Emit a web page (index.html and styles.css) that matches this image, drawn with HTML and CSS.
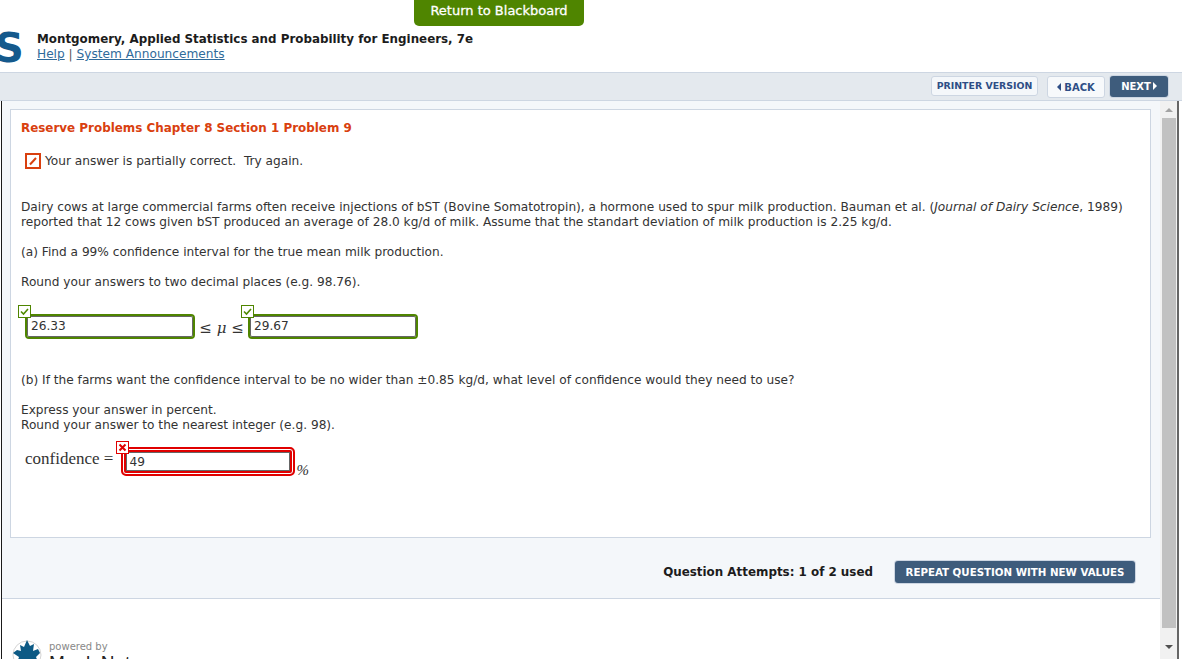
FILE: index.html
```html
<!DOCTYPE html>
<html lang="en">
<head>
    <meta charset="UTF-8">
    <title>WileyPLUS</title>
    <link rel="stylesheet" href="styles.css">
</head>
<body>
    <header class="top">
        <a class="return-btn">Return to Blackboard</a>
        <div class="brand">
            <span class="logo-s">S</span>
            <div class="titles">
                <div class="book">Montgomery, Applied Statistics and Probability for Engineers, 7e</div>
                <div class="links"><a>Help</a> | <a>System Announcements</a></div>
            </div>
        </div>
    </header>

    <nav class="toolbar">
        <a class="btn-print">PRINTER VERSION</a>
        <a class="btn-back"><span class="arrow-left"></span>BACK</a>
        <a class="btn-next">NEXT<span class="arrow-right"></span></a>
    </nav>

    <div class="frame">
        <div class="scroller">
            <div class="content">
                <main class="card">
                    <h2>Reserve Problems Chapter 8 Section 1 Problem 9</h2>
                    <div class="status">
                        <span class="partial-icon">
                            <svg width="12" height="12" viewBox="0 0 12 12"><path d="M3 9.5L9 3" stroke="#d9400f" stroke-width="2"/></svg>
                        </span>
                        <span>Your answer is partially correct.&nbsp; Try again.</span>
                    </div>

                    <p class="intro">Dairy cows at large commercial farms often receive injections of bST (Bovine Somatotropin), a hormone used to spur milk production. Bauman et al. (<i>Journal of Dairy Science</i>, 1989)<br>reported that 12 cows given bST produced an average of 28.0 kg/d of milk. Assume that the standart deviation of milk production is 2.25 kg/d.</p>
                    <p class="part-a">(a) Find a 99% confidence interval for the true mean milk production.</p>
                    <p class="round-a">Round your answers to two decimal places (e.g. 98.76).</p>

                    <div class="answers">
                        <div class="field ok">
                            <span class="mark mark-ok">
                                <svg width="9" height="9" viewBox="0 0 9 9"><path d="M1 4.5L3.5 7L8 2" fill="none" stroke="#4f8a00" stroke-width="1.6"/></svg>
                            </span>
                            <span class="value">26.33</span>
                        </div>
                        <span class="math">≤ <i>μ</i> ≤</span>
                        <div class="field ok">
                            <span class="mark mark-ok">
                                <svg width="9" height="9" viewBox="0 0 9 9"><path d="M1 4.5L3.5 7L8 2" fill="none" stroke="#4f8a00" stroke-width="1.6"/></svg>
                            </span>
                            <span class="value">29.67</span>
                        </div>
                    </div>

                    <p class="part-b">(b) If the farms want the confidence interval to be no wider than ±0.85 kg/d, what level of confidence would they need to use?</p>
                    <p class="round-b">Express your answer in percent.<br>Round your answer to the nearest integer (e.g. 98).</p>

                    <div class="answers-b">
                        <span class="math-label">confidence =</span>
                        <div class="field bad">
                            <span class="mark mark-bad">
                                <svg width="9" height="9" viewBox="0 0 9 9"><path d="M1.5 1.5L7.5 7.5M7.5 1.5L1.5 7.5" stroke="#e00000" stroke-width="2"/></svg>
                            </span>
                            <span class="value">49</span>
                        </div>
                        <span class="percent">%</span>
                    </div>
                </main>

                <div class="attempts">
                    <span class="attempts-text">Question Attempts: 1 of 2 used</span>
                    <a class="btn-repeat">REPEAT QUESTION WITH NEW VALUES</a>
                </div>
            </div>

            <footer class="powered">
                <svg class="leaf" width="30" height="30" viewBox="0 0 30 30">
                    <circle cx="15" cy="15" r="14" fill="none" stroke="#d5d5d5"/>
                    <path d="M15 0L18 6L22 4L21 11L26 9L28 13L24 17L26 22L17 22L17 29L14 29L14 22L5 23L7 17L1 13L5 10L9 11L8 5L12 7Z" fill="#0d5a85"/>
                </svg>
                <div class="powered-text">
                    <div class="powered-by">powered by</div>
                    <div class="maple">MapleNet</div>
                </div>
            </footer>
        </div>

        <div class="scrollbar">
            <span class="tri-up"></span>
            <span class="thumb"></span>
            <span class="tri-down"></span>
        </div>
    </div>
</body>
</html>
```

FILE: styles.css
```css
/* General */
html, body {
    height: 659px;
    overflow: hidden;
}
body {
    margin: 0;
    font-family: "DejaVu Sans", Verdana, sans-serif;
    font-size: 12.17px;
    color: #333;
    background-color: #fff;
    display: flex;
    flex-direction: column;
}
a {
    cursor: pointer;
}

/* Header */
.top {
    position: relative;
    height: 72px;
    flex: none;
    overflow: hidden;
}
.return-btn {
    position: absolute;
    top: -4px;
    left: 414px;
    width: 170px;
    height: 30px;
    line-height: 30px;
    text-align: center;
    background-color: #4f8500;
    color: #fff;
    font-size: 13px;
    -webkit-text-stroke: 0.3px #fff;
    border-radius: 5px;
}
.brand {
    display: flex;
    align-items: flex-start;
    padding-top: 32px;
}
.logo-s {
    width: 30px;
    margin-top: -3px;
    margin-left: -5px;
    margin-right: 12px;
    font-size: 40px;
    line-height: 38px;
    font-weight: bold;
    color: #14598c;
}
.book {
    font-weight: bold;
    font-size: 11.88px;
    line-height: 15px;
    color: #1c1c1c;
}
.links {
    line-height: 15px;
    color: #555;
}
.links a {
    color: #2f6a9a;
    text-decoration: underline;
}

/* Toolbar */
.toolbar {
    flex: none;
    height: 27px;
    background-color: #e4e9ee;
    border-top: 1px solid #cdd6e2;
    border-bottom: 1px solid #cdd6e2;
    display: flex;
    align-items: center;
    justify-content: flex-end;
    padding-right: 14px;
    font-size: 10px;
    font-weight: bold;
}
.btn-print, .btn-back {
    color: #2e4e86;
    background-color: #f4f7fa;
    border: 1px solid #cdd6e2;
    border-radius: 3px;
    text-align: center;
    box-sizing: border-box;
    white-space: nowrap;
}
.btn-print {
    width: 107px;
    height: 20px;
    line-height: 17px;
    margin-right: 9px;
    margin-top: -1px;
    font-size: 9.4px;
}
.btn-back {
    width: 58px;
    height: 22px;
    line-height: 21px;
    margin-right: 5px;
    background-color: #f7f9fb;
}
.btn-next {
    width: 58px;
    height: 21px;
    line-height: 21px;
    text-align: center;
    color: #fff;
    background-color: #3e5c7c;
    border-radius: 3px;
    box-shadow: 0 0 0 1px #cdd6e2;
}
.arrow-left, .arrow-right {
    display: inline-block;
    border-top: 4px solid transparent;
    border-bottom: 4px solid transparent;
}
.arrow-left {
    border-right: 4px solid #2e4e86;
    margin-right: 3px;
}
.arrow-right {
    border-left: 4px solid #fff;
    margin-left: 2px;
}

/* Frame with its own scrollbar */
.frame {
    flex: 1;
    display: flex;
    min-height: 0;
    border-left: 1px solid #1a1a1a;
    margin-left: 1px;
}
.scroller {
    flex: 1;
    min-width: 0;
    overflow: hidden;
}
.content {
    background-color: #f4f7fa;
    border-bottom: 1px solid #cdd6e2;
    padding: 8px 9px 0 8px;
    height: 489px;
}
.card {
    height: 429px;
    box-sizing: border-box;
    background-color: #fff;
    border: 1px solid #cdd6e2;
    padding: 11px 10px 0 10px;
}
.card h2 {
    margin: 0;
    font-size: 11.93px;
    line-height: 15px;
    color: #d9400f;
}
.status {
    display: flex;
    align-items: center;
    margin: 17px 0 0 4px;
    height: 16px;
    gap: 4px;
}
.partial-icon {
    width: 12px;
    height: 12px;
    border: 2px solid #d9400f;
    display: flex;
}
.card p {
    margin: 0;
    line-height: 15px;
}
.intro { padding-top: 31px; }
.part-a { padding-top: 15px; }
.round-a { padding-top: 15px; }
.part-b { padding-top: 34px; }
.round-b { padding-top: 15px; }

/* Answer fields */
.answers {
    display: flex;
    align-items: center;
    margin: 23px 0 0 4px;
    height: 26px;
}
.field {
    position: relative;
    width: 170px;
    height: 25px;
    box-sizing: border-box;
    display: flex;
    align-items: center;
    padding-left: 4px;
    background-color: #fff;
    color: #333;
}
.field.ok {
    border: 2px solid #4f8500;
    border-radius: 4px;
    box-shadow: inset 0 0 0 1px #666;
}
.field.bad {
    margin-top: 2px;
    width: 174px;
    height: 29px;
    border: 2px solid #e00000;
    border-radius: 5px;
    padding-left: 6px;
    box-shadow: inset 0 0 0 1px #fff, inset 0 0 0 3px #e00000, inset 0 0 0 4px #666;
}
.mark {
    position: absolute;
    width: 13px;
    height: 13px;
    top: -11px;
    left: -9px;
    border: 1px solid #4f8500;
    background-color: #fff;
    display: flex;
    align-items: center;
    justify-content: center;
    box-sizing: border-box;
}
.mark-bad {
    top: -8px;
    left: -7px;
    border-color: #e00000;
}
.math {
    width: 53px;
    text-align: center;
    font-family: "DejaVu Serif", serif;
    font-size: 15px;
    padding-top: 3px;
    box-sizing: border-box;
    white-space: nowrap;
}
.answers-b {
    display: flex;
    align-items: flex-start;
    margin: 12px 0 0 4px;
    color: #333;
}
.math-label {
    font-family: "Liberation Serif", serif;
    font-size: 17px;
    line-height: 24px;
    margin-right: 8px;
    margin-top: 2px;
    white-space: nowrap;
}
.percent {
    font-family: "Liberation Serif", serif;
    font-style: italic;
    font-size: 15px;
    margin-top: 17px;
    margin-left: 1px;
}

/* Attempts row */
.attempts {
    display: flex;
    align-items: center;
    justify-content: flex-end;
    height: 60px;
    padding-right: 16px;
    padding-top: 7px;
    box-sizing: border-box;
}
.attempts-text {
    font-weight: bold;
    font-size: 11.9px;
    color: #1c1c1c;
    margin-right: 22px;
}
.btn-repeat {
    width: 240px;
    height: 22px;
    line-height: 22px;
    text-align: center;
    background-color: #3e5c7c;
    color: #fff;
    font-size: 10.25px;
    font-weight: bold;
    border-radius: 3px;
    box-shadow: 0 0 0 1px #cdd6e2;
}

/* Footer logo */
.powered {
    display: flex;
    padding: 41px 0 0 10px;
    gap: 7px;
}
.powered-text {
    margin-top: 1px;
}
.powered-by {
    color: #888;
    font-size: 10px;
    line-height: 12px;
}
.maple {
    font-family: "Liberation Sans", sans-serif;
    font-size: 19px;
    line-height: 20px;
    color: #222;
}

/* Scrollbar */
.scrollbar {
    flex: none;
    width: 17px;
    margin-right: 3px;
    background-color: #f1f1f1;
    border-right: 2px solid #666;
    display: flex;
    flex-direction: column;
    align-items: center;
}
.thumb {
    width: 14px;
    height: 510px;
    background-color: #c1c1c1;
    margin: 6px 0 0;
}
.tri-up, .tri-down {
    width: 0;
    height: 0;
    border-left: 4px solid transparent;
    border-right: 4px solid transparent;
}
.tri-up {
    border-bottom: 4px solid #a3a3a3;
    margin-top: 7px;
}
.tri-down {
    border-top: 4px solid #505050;
    margin-top: 17px;
}
```
